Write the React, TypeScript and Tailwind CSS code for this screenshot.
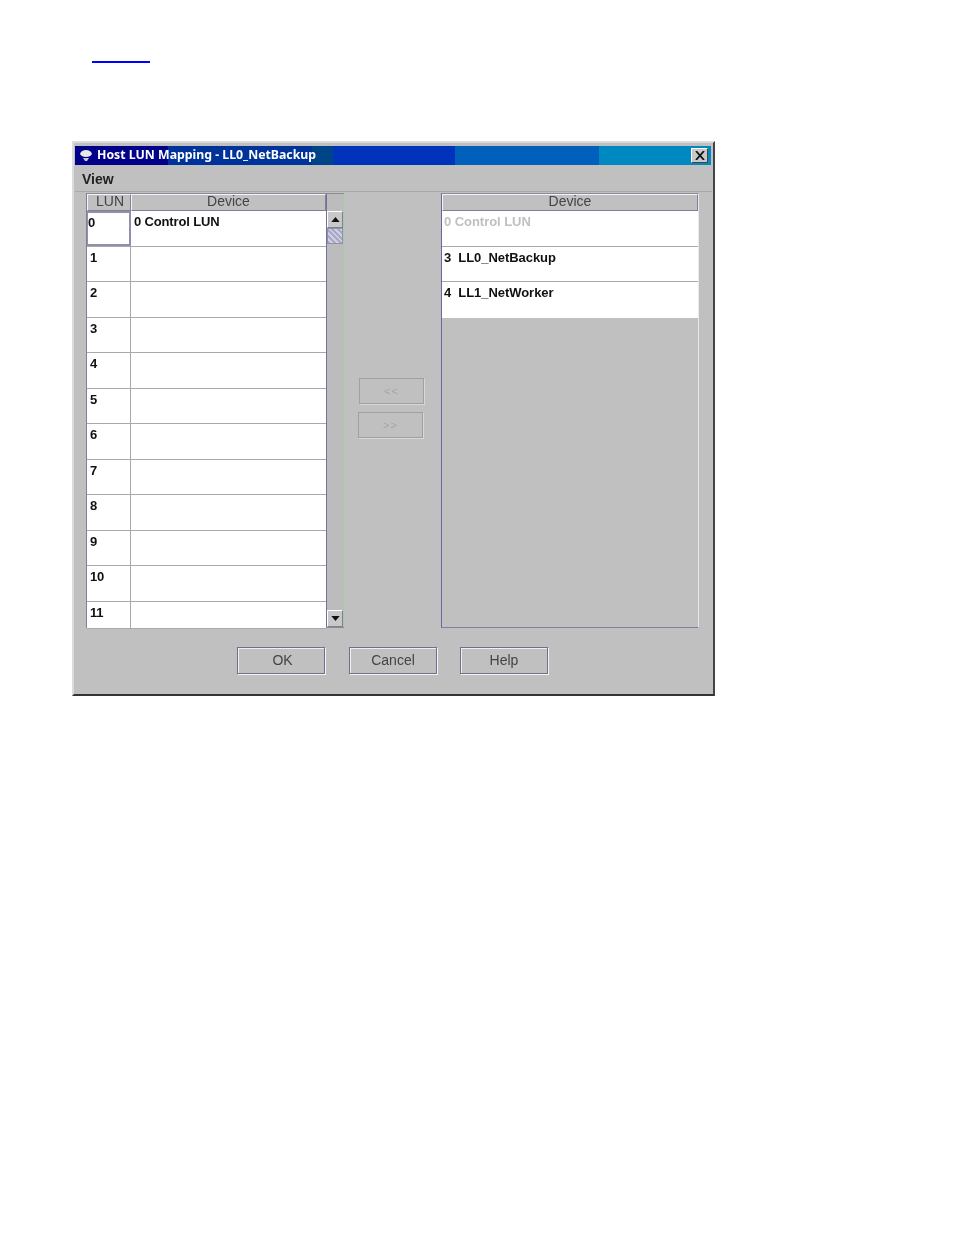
import React from 'react';

const CELL_FONT = "font-['Liberation_Sans',Arial,sans-serif]";

const lunRows = [
  { lun: '0', device: '0 Control LUN', h: 'h-[36px]' },
  { lun: '1', device: '', h: 'h-[35px]' },
  { lun: '2', device: '', h: 'h-[36px]' },
  { lun: '3', device: '', h: 'h-[35px]' },
  { lun: '4', device: '', h: 'h-[36px]' },
  { lun: '5', device: '', h: 'h-[35px]' },
  { lun: '6', device: '', h: 'h-[36px]' },
  { lun: '7', device: '', h: 'h-[35px]' },
  { lun: '8', device: '', h: 'h-[36px]' },
  { lun: '9', device: '', h: 'h-[35px]' },
  { lun: '10', device: '', h: 'h-[36px]' },
  { lun: '11', device: '', h: 'h-[27px]' },
];

const deviceRows = [
  { text: '0 Control LUN', muted: true, h: 'h-[36px] border-b border-b-[#a8a8b0]' },
  { text: '3  LL0_NetBackup', muted: false, h: 'h-[35px] border-b border-b-[#a8a8b0]' },
  { text: '4  LL1_NetWorker', muted: false, h: 'h-[36px]' },
];

const HeaderCell: React.FC<{ label: string; className: string }> = ({ label, className }) => (
  <div className={`h-[17px] pb-[3px] flex items-center justify-center bg-[#c0c0c0] border-t border-l border-t-[#f4f4f4] border-l-[#f4f4f4] border-r border-b border-r-[#7f7f9a] border-b-[#7f7f9a] text-[14px] leading-none text-[#444] ${className}`}>
    {label}
  </div>
);

const ScrollArrow: React.FC<{ down?: boolean }> = ({ down }) => (
  <div className="h-[17px] w-[16px] flex items-center justify-center bg-[#c8c8c8] border-t border-l border-t-white border-l-white border-r border-b border-r-[#808090] border-b-[#808090]">
    <svg width="9" height="5" viewBox="0 0 10 6">
      <path d={down ? 'M0 0h10L5 6z' : 'M5 0l5 6H0z'} fill="#111" />
    </svg>
  </div>
);

const DialogButton: React.FC<{ label: string; className?: string }> = ({ label, className = '' }) => (
  <div className={`w-[88px] h-[27px] flex items-center justify-center border border-[#6f6f90] shadow-[1px_1px_0_#f4f4f4,inset_1px_1px_0_#f0f0f0] text-[14px] text-[#444] ${className}`}>
    {label}
  </div>
);

const MoveButton: React.FC<{ label: string; className?: string }> = ({ label, className = '' }) => (
  <div className={`w-[65px] h-[26px] flex items-center justify-center border border-[#a0a0a0] shadow-[1px_1px_0_#d8d8d8] text-[11px] tracking-[1px] text-[#a4a4a4] ${className}`}>
    {label}
  </div>
);

export default function App() {
  return (
    <div className={`w-[954px] h-[1235px] bg-white overflow-hidden ${CELL_FONT}`}>
      <div className="pt-[61px] pl-[92px] h-[141px]">
        <div className="w-[58px] h-[2px] bg-[#0000ff]" />
      </div>

      <div className="ml-[72px] w-[643px] h-[555px] bg-[#c0c0c0] border-t-2 border-l-2 border-t-[#dcdcdc] border-l-[#dcdcdc] border-r-2 border-b-2 border-r-[#444] border-b-[#333] pt-[3px] px-[1px] blur-[0.35px]">
        {/* title bar */}
        <div className="h-[19px] mr-[1px] flex items-center bg-[linear-gradient(to_right,#000088_0,#000088_93px,#003399_93px,#003399_237px,#004488_237px,#004488_258px,#0033bb_258px,#0033bb_380px,#0060bb_380px,#0060bb_524px,#0088c0_524px)]">
          <svg className="ml-[4px]" width="14" height="14" viewBox="0 0 14 14">
            <path d="M1 5c1-3 3-4 6-4s5 1 6 4c-1 2-3 3-6 3S2 7 1 5z" fill="#e8e8e8" />
            <path d="M4 9h6l-2 3H6z" fill="#c8c8d8" />
          </svg>
          <span className="ml-[4px] font-['Noto_Sans',sans-serif] font-bold text-[12.3px] text-white whitespace-nowrap">Host LUN Mapping - LL0_NetBackup</span>
          <div className="ml-auto mr-[3px] w-[17px] h-[15px] flex items-center justify-center bg-[#c8c8c8] border-t border-l border-t-white border-l-white border-r border-b border-r-[#444] border-b-[#444]">
            <svg width="10" height="9" viewBox="0 0 10 9">
              <path d="M1 0l8 9M9 0L1 9" stroke="#111" strokeWidth="1.8" fill="none" />
            </svg>
          </div>
        </div>

        {/* menu */}
        <div className="h-[27px] pt-[2px] border-b border-b-[#a8a8a8] pl-[7px] flex items-center font-bold text-[14px] text-[#222]">View</div>

        <div className="flex pl-[11px] pt-[1px]">
          {/* left table */}
          <div className="w-[258px] h-[435px] flex border border-[#8a8a9a] border-l-0 border-r-0">
            <div className="w-[240px] border-l border-l-[#7f7f9a]">
              <div className="flex">
                <HeaderCell label="LUN" className="w-[44px] pl-[2px]" />
                <HeaderCell label="Device" className="flex-1" />
              </div>
              {lunRows.map((row) => (
                <div key={row.lun} className={`${row.h} flex bg-white border-b border-b-[#a8a8b0] text-[13px] tracking-[-0.15px] font-bold text-[#111]`}>
                  <div className={row.lun === '0' ? 'w-[44px] border-2 border-l border-[#9090a8] leading-[19px]' : 'w-[44px] pl-[3px] border-r border-r-[#a8a8b0] leading-[21px]'}>{row.lun}</div>
                  <div className={`flex-1 pl-[3px] ${row.lun === '0' ? 'leading-[22px]' : 'leading-[21px]'}`}>{row.device}</div>
                </div>
              ))}
            </div>
            <div className="w-[18px] flex flex-col bg-[#bcbcbc] border-l border-l-[#7070a0] border-r border-r-[#a8c8a8] pt-[17px]">
              <ScrollArrow />
              <div className="h-[16px] w-[16px] border border-[#9090b0] bg-[repeating-linear-gradient(45deg,#a8a8c8_0,#a8a8c8_2px,#d0d0dc_2px,#d0d0dc_4px)]" />
              <div className="flex-1" />
              <ScrollArrow down />
            </div>
          </div>

          {/* move buttons */}
          <div className="w-[97px]">
            <div className="pt-[185px] pl-[15px] flex flex-col gap-[8px]">
              <MoveButton label="<<" />
              <MoveButton label=">>" className="-ml-[1px]" />
            </div>
          </div>

          {/* right table */}
          <div className="w-[258px] h-[435px] bg-[#c0c0c0] border-t border-t-[#8a8a9a] border-l border-l-[#6868a0] border-r border-r-[#e8e8e8] border-b border-b-[#8080a0]">
            <HeaderCell label="Device" className="w-full" />
            {deviceRows.map((row) => (
              <div key={row.text} className={`${row.h} bg-white pl-[2px] leading-[22px] text-[13px] tracking-[-0.05px] font-bold whitespace-pre ${row.muted ? 'text-[#c0c0c0]' : 'text-[#111]'}`}>
                {row.text}
              </div>
            ))}
          </div>
        </div>

        {/* dialog actions */}
        <div className="flex pt-[19px] pl-[162px]">
          <DialogButton label="OK" className="pl-[3px]" />
          <DialogButton label="Cancel" className="ml-[24px]" />
          <DialogButton label="Help" className="ml-[23px]" />
        </div>
      </div>
    </div>
  );
}
